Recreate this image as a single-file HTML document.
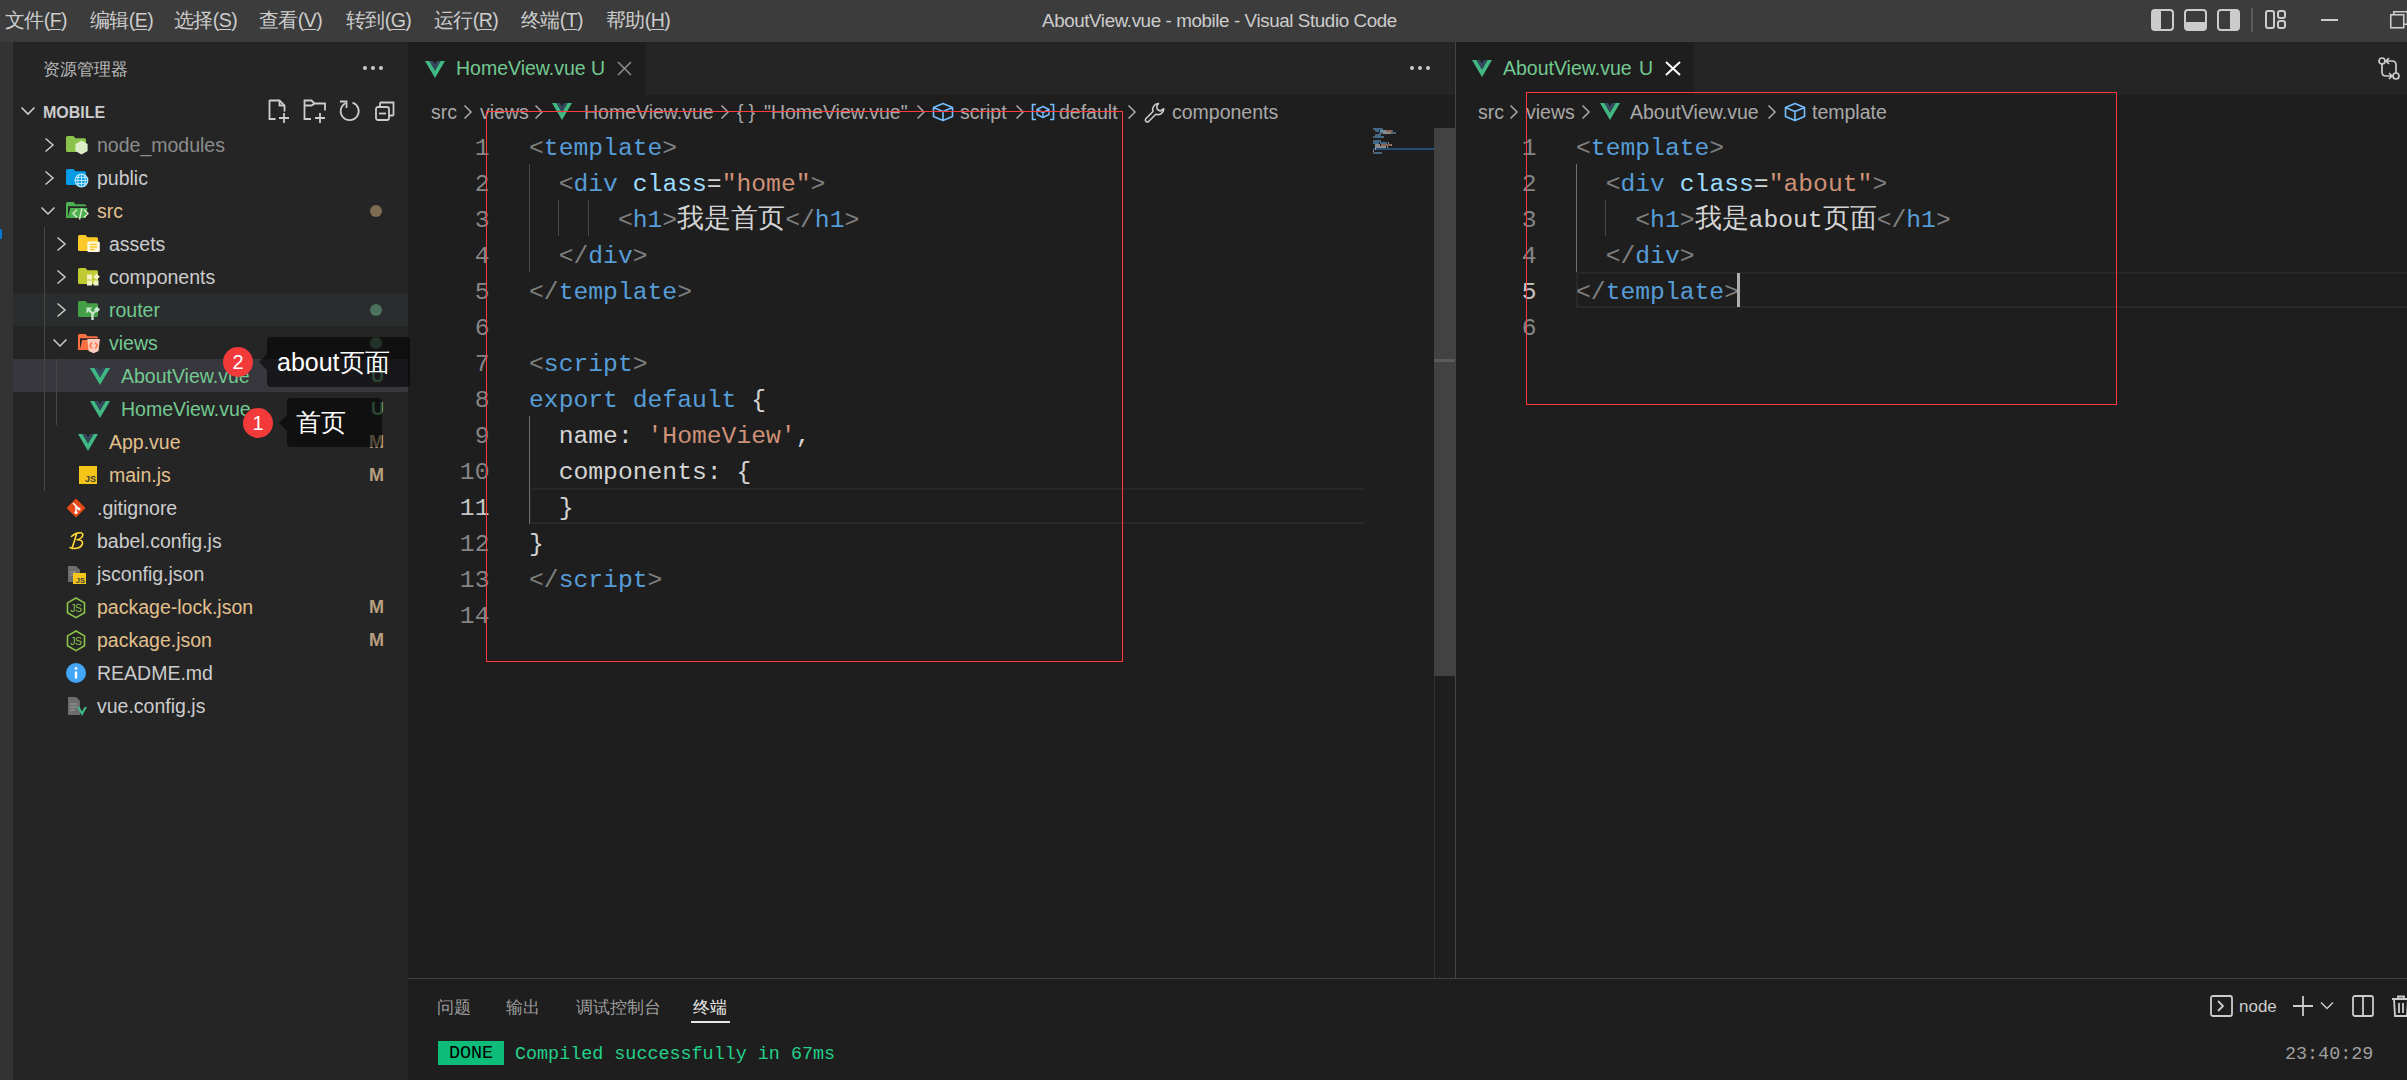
<!DOCTYPE html><html><head><meta charset="utf-8"><title>VS Code</title><style>
*{margin:0;padding:0;box-sizing:border-box}
html,body{width:2407px;height:1080px;overflow:hidden;background:#1e1e1e;font-family:"Liberation Sans",sans-serif;color:#cccccc}
.a{position:absolute;white-space:pre}
.mono{font-family:"Liberation Mono",monospace}
svg{position:absolute;overflow:visible}
.cj{font-size:27px}
</style></head><body>
<div class="a" style="left:0px;top:0px;width:2407px;height:42px;background:#3c3c3c;"></div>
<div class="a" style="left:0px;top:42px;width:13px;height:1038px;background:#333333;"></div>
<div class="a" style="left:0px;top:229px;width:2px;height:10px;background:#0078d4;border-radius:0 1px 1px 0"></div>
<div class="a" style="left:13px;top:42px;width:395px;height:1038px;background:#252526;"></div>
<div class="a" style="left:408px;top:42px;width:1047px;height:53px;background:#252526;"></div>
<div class="a" style="left:408px;top:42px;width:238px;height:53px;background:#1e1e1e;"></div>
<div class="a" style="left:1455px;top:42px;width:1px;height:936px;background:#444444;"></div>
<div class="a" style="left:1456px;top:42px;width:951px;height:53px;background:#252526;"></div>
<div class="a" style="left:1456px;top:42px;width:238px;height:53px;background:#1e1e1e;"></div>
<div class="a" style="left:5px;top:0px;font-size:19.5px;color:#cccccc;line-height:40px;text-decoration-thickness:1px;text-underline-offset:2px;letter-spacing:-0.6px">文件(<u>F</u>)</div>
<div class="a" style="left:90px;top:0px;font-size:19.5px;color:#cccccc;line-height:40px;text-decoration-thickness:1px;text-underline-offset:2px;letter-spacing:-0.6px">编辑(<u>E</u>)</div>
<div class="a" style="left:174px;top:0px;font-size:19.5px;color:#cccccc;line-height:40px;text-decoration-thickness:1px;text-underline-offset:2px;letter-spacing:-0.6px">选择(<u>S</u>)</div>
<div class="a" style="left:259px;top:0px;font-size:19.5px;color:#cccccc;line-height:40px;text-decoration-thickness:1px;text-underline-offset:2px;letter-spacing:-0.6px">查看(<u>V</u>)</div>
<div class="a" style="left:346px;top:0px;font-size:19.5px;color:#cccccc;line-height:40px;text-decoration-thickness:1px;text-underline-offset:2px;letter-spacing:-0.6px">转到(<u>G</u>)</div>
<div class="a" style="left:434px;top:0px;font-size:19.5px;color:#cccccc;line-height:40px;text-decoration-thickness:1px;text-underline-offset:2px;letter-spacing:-0.6px">运行(<u>R</u>)</div>
<div class="a" style="left:521px;top:0px;font-size:19.5px;color:#cccccc;line-height:40px;text-decoration-thickness:1px;text-underline-offset:2px;letter-spacing:-0.6px">终端(<u>T</u>)</div>
<div class="a" style="left:606px;top:0px;font-size:19.5px;color:#cccccc;line-height:40px;text-decoration-thickness:1px;text-underline-offset:2px;letter-spacing:-0.6px">帮助(<u>H</u>)</div>
<div class="a" style="left:1042px;top:1px;font-size:18.8px;color:#cccccc;line-height:40px;letter-spacing:-0.4px">AboutView.vue - mobile - Visual Studio Code</div>
<svg style="left:2151px;top:9px" width="23" height="22" viewBox="0 0 23 22"><rect x="1" y="1" width="21" height="20" rx="3" fill="none" stroke="#cccccc" stroke-width="2"/><rect x="1" y="1" width="9" height="20" rx="2" fill="#cccccc"/></svg>
<svg style="left:2184px;top:9px" width="23" height="22" viewBox="0 0 23 22"><rect x="1" y="1" width="21" height="20" rx="3" fill="none" stroke="#cccccc" stroke-width="2"/><rect x="1" y="13" width="21" height="8" rx="2" fill="#cccccc"/></svg>
<svg style="left:2217px;top:9px" width="23" height="22" viewBox="0 0 23 22"><rect x="1" y="1" width="21" height="20" rx="3" fill="none" stroke="#cccccc" stroke-width="2"/><rect x="13" y="1" width="9" height="20" rx="2" fill="#cccccc"/></svg>
<div class="a" style="left:2251px;top:8px;width:2px;height:24px;background:#5a5a5a;"></div>
<svg style="left:2265px;top:10px" width="22" height="20" viewBox="0 0 22 20"><rect x="1" y="1" width="8" height="17" rx="2" fill="none" stroke="#cccccc" stroke-width="2"/><rect x="13" y="1" width="7" height="7" rx="2" fill="none" stroke="#cccccc" stroke-width="2"/><rect x="13" y="11" width="7" height="7" rx="2" fill="none" stroke="#cccccc" stroke-width="2"/></svg>
<div class="a" style="left:2321px;top:19px;width:17px;height:2px;background:#cccccc;"></div>
<svg style="left:2390px;top:11px" width="20" height="18" viewBox="0 0 20 18"><rect x="0.75" y="3.75" width="13" height="13" fill="none" stroke="#cccccc" stroke-width="1.6"/><path d="M3.75 3.5V0.75H17.5V13.25H14" fill="none" stroke="#cccccc" stroke-width="1.6"/></svg>
<div class="a" style="left:43px;top:51px;font-size:16.5px;color:#bbbbbb;line-height:36px;">资源管理器</div>
<div class="a" style="left:363px;top:66px;width:4px;height:4px;background:#cccccc;border-radius:2px"></div>
<div class="a" style="left:371px;top:66px;width:4px;height:4px;background:#cccccc;border-radius:2px"></div>
<div class="a" style="left:379px;top:66px;width:4px;height:4px;background:#cccccc;border-radius:2px"></div>
<svg style="left:20px;top:104px" width="16" height="14" viewBox="0 0 16 14"><path d="M1.5 3.5l6.5 6.5 6.5-6.5" fill="none" stroke="#cccccc" stroke-width="1.6"/></svg>
<div class="a" style="left:43px;top:96px;font-size:16px;color:#cccccc;line-height:33px;font-weight:bold">MOBILE</div>
<svg style="left:268px;top:99px" width="24" height="24" viewBox="0 0 24 24"><path d="M1.5 1.5h10l5 5v6" fill="none" stroke="#cccccc" stroke-width="1.8"/><path d="M11.5 1.5v5h5" fill="none" stroke="#cccccc" stroke-width="1.8"/><path d="M1.5 1v19h6" fill="none" stroke="#cccccc" stroke-width="1.8"/><path d="M16 14v10M11 19h10" stroke="#cccccc" stroke-width="1.8"/></svg>
<svg style="left:303px;top:99px" width="26" height="24" viewBox="0 0 26 24"><path d="M8 20H1.5V1.5h7l3 3h10.5v7" fill="none" stroke="#cccccc" stroke-width="1.8"/><path d="M1.5 6.5h7l3-2" fill="none" stroke="#cccccc" stroke-width="1.8"/><path d="M17 14v10M12 19h10" stroke="#cccccc" stroke-width="1.8"/></svg>
<svg style="left:339px;top:100px" width="22" height="22" viewBox="0 0 22 22"><path d="M6.5 3.2A9 9 0 1 0 13.5 2.6" fill="none" stroke="#cccccc" stroke-width="1.8"/><path d="M1 1.5h6.5v6.5" fill="none" stroke="#cccccc" stroke-width="1.8"/></svg>
<svg style="left:375px;top:101px" width="22" height="20" viewBox="0 0 22 20"><rect x="1" y="6" width="13" height="13" rx="2" fill="none" stroke="#cccccc" stroke-width="1.8"/><path d="M5 1.5h13.5v13" fill="none" stroke="#cccccc" stroke-width="1.8"/><path d="M5 1.5v4.5M14 14.5h4.5" fill="none" stroke="#cccccc" stroke-width="1.8"/><path d="M4 12.5h7" stroke="#cccccc" stroke-width="1.8"/></svg>
<div class="a" style="left:13px;top:293px;width:395px;height:33px;background:#2a2d2e;"></div>
<div class="a" style="left:13px;top:359px;width:395px;height:33px;background:#37373d;"></div>
<div class="a" style="left:44px;top:227px;width:1px;height:264px;background:#464646;"></div>
<div class="a" style="left:56px;top:359px;width:1px;height:66px;background:#464646;"></div>
<svg style="left:44px;top:137px" width="11" height="16" viewBox="0 0 11 16"><path d="M1.5 1.5l7.5 6.5-7.5 6.5" fill="none" stroke="#cccccc" stroke-width="1.5"/></svg>
<svg style="left:66px;top:136px" width="24" height="20" viewBox="0 0 24 20"><path d="M0 1.5Q0 0 1.5 0h6l2 2.3h9Q20 2.3 20 3.8v10.7Q20 16 18.5 16h-17Q0 16 0 14.5z" fill="#8bc34a"/><path d="M15.5 4.5L21.6 8v7L15.5 18.5 9.4 15V8z" fill="#dcedc8"/></svg>
<div class="a" style="left:97px;top:129px;font-size:19.5px;color:#8c8c8c;line-height:33px;">node_modules</div>
<svg style="left:44px;top:170px" width="11" height="16" viewBox="0 0 11 16"><path d="M1.5 1.5l7.5 6.5-7.5 6.5" fill="none" stroke="#cccccc" stroke-width="1.5"/></svg>
<svg style="left:66px;top:169px" width="24" height="20" viewBox="0 0 24 20"><path d="M0 1.5Q0 0 1.5 0h6l2 2.3h9Q20 2.3 20 3.8v10.7Q20 16 18.5 16h-17Q0 16 0 14.5z" fill="#039be5"/><circle cx="15.5" cy="11.5" r="6.3" fill="#039be5" stroke="#b3e5fc" stroke-width="1.3"/><path d="M9.5 11.5h12M15.5 5.5v12M13 6q-2.5 5.5 0 11M18 6q2.5 5.5 0 11M10.5 8.5h10M10.5 14.5h10" fill="none" stroke="#b3e5fc" stroke-width="1.1"/></svg>
<div class="a" style="left:97px;top:162px;font-size:19.5px;color:#cccccc;line-height:33px;">public</div>
<svg style="left:40px;top:206px" width="16" height="10" viewBox="0 0 16 10"><path d="M1.5 1.5l6.5 6.5 6.5-6.5" fill="none" stroke="#cccccc" stroke-width="1.5"/></svg>
<svg style="left:66px;top:202px" width="24" height="20" viewBox="0 0 24 20"><path d="M0 1.5Q0 0 1.5 0h6l2 2.3h9Q20 2.3 20 3.8V4.3H2V16H0z" fill="#4caf50"/><path d="M4.2 6H21.5L19.5 16H1.8z" fill="#4caf50"/><path d="M11 7.5L7 11.5l4 4M18 7.5l4 4-4 4M16 6l-2.5 11.5" fill="none" stroke="#dcedc8" stroke-width="1.4"/></svg>
<div class="a" style="left:97px;top:195px;font-size:19.5px;color:#e2c08d;line-height:33px;">src</div>
<div class="a" style="left:370px;top:205px;width:12px;height:12px;background:#7d6b52;border-radius:50%"></div>
<svg style="left:56px;top:236px" width="11" height="16" viewBox="0 0 11 16"><path d="M1.5 1.5l7.5 6.5-7.5 6.5" fill="none" stroke="#cccccc" stroke-width="1.5"/></svg>
<svg style="left:78px;top:235px" width="24" height="20" viewBox="0 0 24 20"><path d="M0 1.5Q0 0 1.5 0h6l2 2.3h9Q20 2.3 20 3.8v10.7Q20 16 18.5 16h-17Q0 16 0 14.5z" fill="#ffca28"/><rect x="9.3" y="6.5" width="12.5" height="10.5" rx="1.5" fill="#fff8e1"/><path d="M12 9.5h7M12 12h7M12 14.5h5" stroke="#ffca28" stroke-width="1.3"/></svg>
<div class="a" style="left:109px;top:228px;font-size:19.5px;color:#cccccc;line-height:33px;">assets</div>
<svg style="left:56px;top:269px" width="11" height="16" viewBox="0 0 11 16"><path d="M1.5 1.5l7.5 6.5-7.5 6.5" fill="none" stroke="#cccccc" stroke-width="1.5"/></svg>
<svg style="left:78px;top:268px" width="24" height="20" viewBox="0 0 24 20"><path d="M0 1.5Q0 0 1.5 0h6l2 2.3h9Q20 2.3 20 3.8v10.7Q20 16 18.5 16h-17Q0 16 0 14.5z" fill="#c0ca33"/><rect x="9" y="6.5" width="5" height="5" fill="#f0f4c3"/><rect x="9" y="12.5" width="5" height="5" fill="#f0f4c3"/><rect x="15.5" y="12.5" width="5" height="5" fill="#f0f4c3"/><path d="M18.5 5.5l3.3 3.3-3.3 3.3-3.3-3.3z" fill="#f0f4c3"/></svg>
<div class="a" style="left:109px;top:261px;font-size:19.5px;color:#cccccc;line-height:33px;">components</div>
<svg style="left:56px;top:302px" width="11" height="16" viewBox="0 0 11 16"><path d="M1.5 1.5l7.5 6.5-7.5 6.5" fill="none" stroke="#cccccc" stroke-width="1.5"/></svg>
<svg style="left:78px;top:301px" width="24" height="20" viewBox="0 0 24 20"><path d="M0 1.5Q0 0 1.5 0h6l2 2.3h9Q20 2.3 20 3.8v10.7Q20 16 18.5 16h-17Q0 16 0 14.5z" fill="#43a047"/><path d="M14.5 19V12.5L11.5 9.5" fill="none" stroke="#c8e6c9" stroke-width="2.4"/><path d="M8.5 6.5h6l-6 6z" fill="#c8e6c9"/><path d="M19 5.5l3 3-3 3-3-3z" fill="#c8e6c9"/><path d="M14.5 13l3-3" stroke="#c8e6c9" stroke-width="2"/></svg>
<div class="a" style="left:109px;top:294px;font-size:19.5px;color:#73c991;line-height:33px;">router</div>
<div class="a" style="left:370px;top:304px;width:12px;height:12px;background:#4b725a;border-radius:50%"></div>
<svg style="left:52px;top:338px" width="16" height="10" viewBox="0 0 16 10"><path d="M1.5 1.5l6.5 6.5 6.5-6.5" fill="none" stroke="#cccccc" stroke-width="1.5"/></svg>
<svg style="left:78px;top:334px" width="24" height="20" viewBox="0 0 24 20"><path d="M0 1.5Q0 0 1.5 0h6l2 2.3h9Q20 2.3 20 3.8V4.3H2V16H0z" fill="#ff7043"/><path d="M4.2 6H21.5L19.5 16H1.8z" fill="#ff7043"/><path d="M9.3 5h12.5l-1.2 12-5 2.2-5-2.2z" fill="#ffccbc"/><path d="M14 8.5l-2.3 3 2.3 3M17.2 8.5l2.3 3-2.3 3" fill="none" stroke="#ff7043" stroke-width="1.3"/></svg>
<div class="a" style="left:109px;top:327px;font-size:19.5px;color:#73c991;line-height:33px;">views</div>
<div class="a" style="left:370px;top:337px;width:12px;height:12px;background:#4b725a;border-radius:50%"></div>
<svg style="left:90px;top:368px" width="20" height="17" viewBox="0 0 20 17"><path d="M0 0h4.5L10 9.5 15.5 0H20L10 17z" fill="#41b883"/><path d="M4.5 0h3.5L10 3.5 12 0h3.5L10 9.5z" fill="#35495e"/></svg>
<div class="a" style="left:121px;top:360px;font-size:19.5px;color:#73c991;line-height:33px;">AboutView.vue</div>
<div class="a" style="left:344px;width:40px;text-align:right;top:360px;font-size:18px;line-height:33px;color:#5f9a73;font-weight:bold">U</div>
<svg style="left:90px;top:401px" width="20" height="17" viewBox="0 0 20 17"><path d="M0 0h4.5L10 9.5 15.5 0H20L10 17z" fill="#41b883"/><path d="M4.5 0h3.5L10 3.5 12 0h3.5L10 9.5z" fill="#35495e"/></svg>
<div class="a" style="left:121px;top:393px;font-size:19.5px;color:#73c991;line-height:33px;">HomeView.vue</div>
<div class="a" style="left:344px;width:40px;text-align:right;top:393px;font-size:18px;line-height:33px;color:#5f9a73;font-weight:bold">U</div>
<svg style="left:78px;top:434px" width="20" height="17" viewBox="0 0 20 17"><path d="M0 0h4.5L10 9.5 15.5 0H20L10 17z" fill="#41b883"/><path d="M4.5 0h3.5L10 3.5 12 0h3.5L10 9.5z" fill="#35495e"/></svg>
<div class="a" style="left:109px;top:426px;font-size:19.5px;color:#e2c08d;line-height:33px;">App.vue</div>
<div class="a" style="left:344px;width:40px;text-align:right;top:426px;font-size:18px;line-height:33px;color:#b8a07e;font-weight:bold">M</div>
<svg style="left:79px;top:466px" width="18" height="18" viewBox="0 0 18 18"><rect width="18" height="18" fill="#f5c518"/><text x="17" y="16" font-family="Liberation Sans" font-weight="bold" font-size="9" fill="#3d3d3d" text-anchor="end">JS</text></svg>
<div class="a" style="left:109px;top:459px;font-size:19.5px;color:#e2c08d;line-height:33px;">main.js</div>
<div class="a" style="left:344px;width:40px;text-align:right;top:459px;font-size:18px;line-height:33px;color:#b8a07e;font-weight:bold">M</div>
<svg style="left:66px;top:498px" width="20" height="20" viewBox="0 0 20 20"><path d="M10 0.5l9.5 9.5-9.5 9.5-9.5-9.5z" fill="#e64a19"/><path d="M7 5l6 6M10 8v7" stroke="#fff" stroke-width="1.5" fill="none"/><circle cx="13" cy="11" r="1.6" fill="#fff"/><circle cx="10" cy="14.5" r="1.6" fill="#fff"/></svg>
<div class="a" style="left:97px;top:492px;font-size:19.5px;color:#cccccc;line-height:33px;">.gitignore</div>
<svg style="left:68px;top:531px" width="18" height="20" viewBox="0 0 18 20"><path d="M3.5 5.5Q8 1 13 1.8Q16.5 2.8 13.5 6.5Q11.5 8.5 9 8.7Q15 8.5 14.5 12.5Q13.5 17 7 17.5Q4 17.6 2 16.5M8.5 3.2L4 17.5" fill="none" stroke="#fdd835" stroke-width="1.6" stroke-linecap="round" stroke-linejoin="round"/></svg>
<div class="a" style="left:97px;top:525px;font-size:19.5px;color:#cccccc;line-height:33px;">babel.config.js</div>
<svg style="left:67px;top:565px" width="20" height="20" viewBox="0 0 20 20"><path d="M1 1h8l4 4v12H1z" fill="#6d6d6d"/><path d="M3 7h6M3 10h6" stroke="#9e9e9e" stroke-width="1.2"/><rect x="6" y="8" width="13" height="11" fill="#f5c518"/><text x="18" y="17.5" font-family="Liberation Sans" font-weight="bold" font-size="7.5" fill="#3d3d3d" text-anchor="end">JS</text></svg>
<div class="a" style="left:97px;top:558px;font-size:19.5px;color:#cccccc;line-height:33px;">jsconfig.json</div>
<svg style="left:66px;top:597px" width="20" height="21" viewBox="0 0 20 21"><path d="M10 1l8.5 4.9v9.8L10 20.6 1.5 15.7V5.9z" fill="none" stroke="#8bc34a" stroke-width="1.6"/><text x="10" y="14.8" font-family="Liberation Sans" font-size="10.5" fill="#8bc34a" text-anchor="middle" letter-spacing="-0.5">JS</text></svg>
<div class="a" style="left:97px;top:591px;font-size:19.5px;color:#e2c08d;line-height:33px;">package-lock.json</div>
<div class="a" style="left:344px;width:40px;text-align:right;top:591px;font-size:18px;line-height:33px;color:#b8a07e;font-weight:bold">M</div>
<svg style="left:66px;top:630px" width="20" height="21" viewBox="0 0 20 21"><path d="M10 1l8.5 4.9v9.8L10 20.6 1.5 15.7V5.9z" fill="none" stroke="#8bc34a" stroke-width="1.6"/><text x="10" y="14.8" font-family="Liberation Sans" font-size="10.5" fill="#8bc34a" text-anchor="middle" letter-spacing="-0.5">JS</text></svg>
<div class="a" style="left:97px;top:624px;font-size:19.5px;color:#e2c08d;line-height:33px;">package.json</div>
<div class="a" style="left:344px;width:40px;text-align:right;top:624px;font-size:18px;line-height:33px;color:#b8a07e;font-weight:bold">M</div>
<svg style="left:66px;top:663px" width="20" height="20" viewBox="0 0 20 20"><circle cx="10" cy="10" r="10" fill="#42a5f5"/><rect x="8.8" y="8.5" width="2.4" height="7" fill="#fff"/><circle cx="10" cy="5.5" r="1.4" fill="#fff"/></svg>
<div class="a" style="left:97px;top:657px;font-size:19.5px;color:#cccccc;line-height:33px;">README.md</div>
<svg style="left:67px;top:696px" width="22" height="20" viewBox="0 0 22 20"><path d="M1 1h8l4 4v14H1z" fill="#6d6d6d"/><path d="M3 8h7M3 11h7M3 14h5" stroke="#9e9e9e" stroke-width="1.2"/><path d="M10 11h2.5L15 15.5 17.5 11H20l-5 9z" fill="#41b883"/></svg>
<div class="a" style="left:97px;top:690px;font-size:19.5px;color:#cccccc;line-height:33px;">vue.config.js</div>
<div class="a" style="left:267px;top:337px;width:143px;height:50px;background:rgba(0,0,0,0.55);border-radius:4px"></div>
<svg style="left:259px;top:354px" width="8" height="16"><path d="M0 8L8 0V16z" fill="rgba(0,0,0,0.55)"/></svg>
<div class="a" style="left:223px;top:347px;width:30px;height:30px;border-radius:50%;background:#f23a3a;color:#fff;font-size:20px;line-height:30px;text-align:center">2</div>
<div class="a" style="left:277px;top:337px;font-size:25px;color:#ffffff;line-height:50px;">about页面</div>
<div class="a" style="left:287px;top:398px;width:95px;height:49px;background:rgba(0,0,0,0.55);border-radius:4px"></div>
<svg style="left:279px;top:415px" width="8" height="16"><path d="M0 8L8 0V16z" fill="rgba(0,0,0,0.55)"/></svg>
<div class="a" style="left:243px;top:408px;width:30px;height:30px;border-radius:50%;background:#f23a3a;color:#fff;font-size:20px;line-height:30px;text-align:center">1</div>
<div class="a" style="left:296px;top:398px;font-size:25px;color:#ffffff;line-height:49px;">首页</div>
<svg style="left:425px;top:61px" width="20" height="17" viewBox="0 0 20 17"><path d="M0 0h4.5L10 9.5 15.5 0H20L10 17z" fill="#41b883"/><path d="M4.5 0h3.5L10 3.5 12 0h3.5L10 9.5z" fill="#35495e"/></svg>
<div class="a" style="left:456px;top:42px;font-size:19.5px;color:#73c991;line-height:53px;">HomeView.vue</div>
<div class="a" style="left:591px;top:42px;font-size:19.5px;color:#73c991;line-height:53px;">U</div>
<svg style="left:617px;top:61px" width="15" height="15" viewBox="0 0 15 15"><path d="M1 1l13 13M14 1L1 14" stroke="#8b8b8b" stroke-width="1.6"/></svg>
<div class="a" style="left:1410px;top:66px;width:4px;height:4px;background:#cccccc;border-radius:2px"></div>
<div class="a" style="left:1418px;top:66px;width:4px;height:4px;background:#cccccc;border-radius:2px"></div>
<div class="a" style="left:1426px;top:66px;width:4px;height:4px;background:#cccccc;border-radius:2px"></div>
<svg style="left:1472px;top:60px" width="20" height="17" viewBox="0 0 20 17"><path d="M0 0h4.5L10 9.5 15.5 0H20L10 17z" fill="#41b883"/><path d="M4.5 0h3.5L10 3.5 12 0h3.5L10 9.5z" fill="#35495e"/></svg>
<div class="a" style="left:1503px;top:42px;font-size:19.5px;color:#73c991;line-height:53px;">AboutView.vue</div>
<div class="a" style="left:1639px;top:42px;font-size:19.5px;color:#73c991;line-height:53px;">U</div>
<svg style="left:1665px;top:61px" width="16" height="15" viewBox="0 0 16 15"><path d="M1 1l14 13M15 1L1 14" stroke="#ffffff" stroke-width="2"/></svg>
<svg style="left:2377px;top:55px" width="24" height="26" viewBox="0 0 24 26"><circle cx="5" cy="6" r="3" fill="none" stroke="#cccccc" stroke-width="1.7"/><circle cx="19" cy="21" r="3" fill="none" stroke="#cccccc" stroke-width="1.7"/><path d="M5 9V17Q5 21 9 21H15M12 18l3 3-3 3M19 18V10Q19 6 15 6H9M12 3L9 6l3 3" fill="none" stroke="#cccccc" stroke-width="1.7"/></svg>
<div class="a" style="left:431px;top:96px;font-size:19.5px;color:#a9a9a9;line-height:33px;">src</div>
<svg style="left:463px;top:104px" width="10" height="16" viewBox="0 0 10 16"><path d="M1.5 1.5l6.5 6.5-6.5 6.5" fill="none" stroke="#a9a9a9" stroke-width="1.5"/></svg>
<div class="a" style="left:480px;top:96px;font-size:19.5px;color:#a9a9a9;line-height:33px;">views</div>
<svg style="left:534px;top:104px" width="10" height="16" viewBox="0 0 10 16"><path d="M1.5 1.5l6.5 6.5-6.5 6.5" fill="none" stroke="#a9a9a9" stroke-width="1.5"/></svg>
<svg style="left:552px;top:103px" width="20" height="17" viewBox="0 0 20 17"><path d="M0 0h4.5L10 9.5 15.5 0H20L10 17z" fill="#41b883"/><path d="M4.5 0h3.5L10 3.5 12 0h3.5L10 9.5z" fill="#35495e"/></svg>
<div class="a" style="left:584px;top:96px;font-size:19.5px;color:#a9a9a9;line-height:33px;">HomeView.vue</div>
<svg style="left:720px;top:104px" width="10" height="16" viewBox="0 0 10 16"><path d="M1.5 1.5l6.5 6.5-6.5 6.5" fill="none" stroke="#a9a9a9" stroke-width="1.5"/></svg>
<div class="a" style="left:737px;top:96px;font-size:19.5px;color:#a9a9a9;line-height:33px;letter-spacing:5px">{}</div>
<div class="a" style="left:764px;top:96px;font-size:19.5px;color:#a9a9a9;line-height:33px;">"HomeView.vue"</div>
<svg style="left:916px;top:104px" width="10" height="16" viewBox="0 0 10 16"><path d="M1.5 1.5l6.5 6.5-6.5 6.5" fill="none" stroke="#a9a9a9" stroke-width="1.5"/></svg>
<svg style="left:932px;top:102px" width="22" height="20" viewBox="0 0 22 20"><path d="M11 1.5L20.5 5.5v9L11 18.5 1.5 14.5v-9z M1.5 5.5L11 9.5l9.5-4M11 9.5v9" fill="none" stroke="#75beff" stroke-width="1.6" stroke-linejoin="round"/></svg>
<div class="a" style="left:960px;top:96px;font-size:19.5px;color:#a9a9a9;line-height:33px;">script</div>
<svg style="left:1015px;top:104px" width="10" height="16" viewBox="0 0 10 16"><path d="M1.5 1.5l6.5 6.5-6.5 6.5" fill="none" stroke="#a9a9a9" stroke-width="1.5"/></svg>
<svg style="left:1031px;top:103px" width="24" height="18" viewBox="0 0 24 18"><path d="M5 1.5H1.5v15H5M19 1.5h3.5v15H19" fill="none" stroke="#75beff" stroke-width="1.6"/><path d="M12 3.5l6 3v5l-6 3-6-3v-5z M6 6.5l6 3 6-3M12 9.5v5" fill="none" stroke="#75beff" stroke-width="1.4" stroke-linejoin="round"/></svg>
<div class="a" style="left:1059px;top:96px;font-size:19.5px;color:#a9a9a9;line-height:33px;">default</div>
<svg style="left:1127px;top:104px" width="10" height="16" viewBox="0 0 10 16"><path d="M1.5 1.5l6.5 6.5-6.5 6.5" fill="none" stroke="#a9a9a9" stroke-width="1.5"/></svg>
<svg style="left:1144px;top:101px" width="24" height="24" viewBox="0 0 24 24"><path d="M14.5 2.5a6 6 0 0 0-5.5 8L1.8 17.7a2 2 0 0 0 2.8 2.8L11.8 13.3a6 6 0 0 0 8-5.5l-3.5 2.2-3-1.5-.5-3.5z" fill="none" stroke="#cccccc" stroke-width="1.6" stroke-linejoin="round"/></svg>
<div class="a" style="left:1172px;top:96px;font-size:19.5px;color:#a9a9a9;line-height:33px;">components</div>
<div class="a" style="left:1478px;top:96px;font-size:19.5px;color:#a9a9a9;line-height:33px;">src</div>
<svg style="left:1509px;top:104px" width="10" height="16" viewBox="0 0 10 16"><path d="M1.5 1.5l6.5 6.5-6.5 6.5" fill="none" stroke="#a9a9a9" stroke-width="1.5"/></svg>
<div class="a" style="left:1526px;top:96px;font-size:19.5px;color:#a9a9a9;line-height:33px;">views</div>
<svg style="left:1581px;top:104px" width="10" height="16" viewBox="0 0 10 16"><path d="M1.5 1.5l6.5 6.5-6.5 6.5" fill="none" stroke="#a9a9a9" stroke-width="1.5"/></svg>
<svg style="left:1600px;top:103px" width="20" height="17" viewBox="0 0 20 17"><path d="M0 0h4.5L10 9.5 15.5 0H20L10 17z" fill="#41b883"/><path d="M4.5 0h3.5L10 3.5 12 0h3.5L10 9.5z" fill="#35495e"/></svg>
<div class="a" style="left:1630px;top:96px;font-size:19.5px;color:#a9a9a9;line-height:33px;">AboutView.vue</div>
<svg style="left:1767px;top:104px" width="10" height="16" viewBox="0 0 10 16"><path d="M1.5 1.5l6.5 6.5-6.5 6.5" fill="none" stroke="#a9a9a9" stroke-width="1.5"/></svg>
<svg style="left:1784px;top:102px" width="22" height="20" viewBox="0 0 22 20"><path d="M11 1.5L20.5 5.5v9L11 18.5 1.5 14.5v-9z M1.5 5.5L11 9.5l9.5-4M11 9.5v9" fill="none" stroke="#75beff" stroke-width="1.6" stroke-linejoin="round"/></svg>
<div class="a" style="left:1812px;top:96px;font-size:19.5px;color:#a9a9a9;line-height:33px;">template</div>
<div class="a" style="left:529px;top:488px;width:836px;height:36px;background:transparent;border:2px solid #282828;border-right:0"></div>
<div class="a" style="left:1576px;top:272px;width:831px;height:36px;background:transparent;border:2px solid #282828;border-right:0"></div>
<div class="a" style="left:529px;top:164px;width:1px;height:108px;background:#484848;"></div>
<div class="a" style="left:558px;top:200px;width:1px;height:36px;background:#484848;"></div>
<div class="a" style="left:588px;top:200px;width:1px;height:36px;background:#484848;"></div>
<div class="a" style="left:529px;top:416px;width:1px;height:108px;background:#6e6e6e;"></div>
<div class="a" style="left:1576px;top:164px;width:1px;height:108px;background:#6e6e6e;"></div>
<div class="a" style="left:1605px;top:200px;width:1px;height:36px;background:#484848;"></div>
<div class="a mono" style="left:429.5px;width:60px;text-align:right;top:129.7px;font-size:24.7px;line-height:36px;color:#858585">1</div>
<div class="a mono" style="left:529px;top:129.7px;font-size:24.7px;line-height:36px"><span style="color:#808080">&lt;</span><span style="color:#569cd6">template</span><span style="color:#808080">&gt;</span></div>
<div class="a mono" style="left:429.5px;width:60px;text-align:right;top:165.7px;font-size:24.7px;line-height:36px;color:#858585">2</div>
<div class="a mono" style="left:529px;top:165.7px;font-size:24.7px;line-height:36px"><span style="color:#d4d4d4">  </span><span style="color:#808080">&lt;</span><span style="color:#569cd6">div</span><span style="color:#d4d4d4"> </span><span style="color:#9cdcfe">class</span><span style="color:#d4d4d4">=</span><span style="color:#ce9178">"home"</span><span style="color:#808080">&gt;</span></div>
<div class="a mono" style="left:429.5px;width:60px;text-align:right;top:201.7px;font-size:24.7px;line-height:36px;color:#858585">3</div>
<div class="a mono" style="left:529px;top:201.7px;font-size:24.7px;line-height:36px"><span style="color:#d4d4d4">      </span><span style="color:#808080">&lt;</span><span style="color:#569cd6">h1</span><span style="color:#808080">&gt;</span><span style="color:#d4d4d4"><span class="cj">我是首页</span></span><span style="color:#808080">&lt;/</span><span style="color:#569cd6">h1</span><span style="color:#808080">&gt;</span></div>
<div class="a mono" style="left:429.5px;width:60px;text-align:right;top:237.7px;font-size:24.7px;line-height:36px;color:#858585">4</div>
<div class="a mono" style="left:529px;top:237.7px;font-size:24.7px;line-height:36px"><span style="color:#d4d4d4">  </span><span style="color:#808080">&lt;/</span><span style="color:#569cd6">div</span><span style="color:#808080">&gt;</span></div>
<div class="a mono" style="left:429.5px;width:60px;text-align:right;top:273.7px;font-size:24.7px;line-height:36px;color:#858585">5</div>
<div class="a mono" style="left:529px;top:273.7px;font-size:24.7px;line-height:36px"><span style="color:#808080">&lt;/</span><span style="color:#569cd6">template</span><span style="color:#808080">&gt;</span></div>
<div class="a mono" style="left:429.5px;width:60px;text-align:right;top:309.7px;font-size:24.7px;line-height:36px;color:#858585">6</div>
<div class="a mono" style="left:529px;top:309.7px;font-size:24.7px;line-height:36px"></div>
<div class="a mono" style="left:429.5px;width:60px;text-align:right;top:345.7px;font-size:24.7px;line-height:36px;color:#858585">7</div>
<div class="a mono" style="left:529px;top:345.7px;font-size:24.7px;line-height:36px"><span style="color:#808080">&lt;</span><span style="color:#569cd6">script</span><span style="color:#808080">&gt;</span></div>
<div class="a mono" style="left:429.5px;width:60px;text-align:right;top:381.7px;font-size:24.7px;line-height:36px;color:#858585">8</div>
<div class="a mono" style="left:529px;top:381.7px;font-size:24.7px;line-height:36px"><span style="color:#569cd6">export</span><span style="color:#d4d4d4"> </span><span style="color:#569cd6">default</span><span style="color:#d4d4d4"> {</span></div>
<div class="a mono" style="left:429.5px;width:60px;text-align:right;top:417.7px;font-size:24.7px;line-height:36px;color:#858585">9</div>
<div class="a mono" style="left:529px;top:417.7px;font-size:24.7px;line-height:36px"><span style="color:#d4d4d4">  name: </span><span style="color:#ce9178">'HomeView'</span><span style="color:#d4d4d4">,</span></div>
<div class="a mono" style="left:429.5px;width:60px;text-align:right;top:453.7px;font-size:24.7px;line-height:36px;color:#858585">10</div>
<div class="a mono" style="left:529px;top:453.7px;font-size:24.7px;line-height:36px"><span style="color:#d4d4d4">  components: {</span></div>
<div class="a mono" style="left:429.5px;width:60px;text-align:right;top:489.7px;font-size:24.7px;line-height:36px;color:#c6c6c6">11</div>
<div class="a mono" style="left:529px;top:489.7px;font-size:24.7px;line-height:36px"><span style="color:#d4d4d4">  }</span></div>
<div class="a mono" style="left:429.5px;width:60px;text-align:right;top:525.7px;font-size:24.7px;line-height:36px;color:#858585">12</div>
<div class="a mono" style="left:529px;top:525.7px;font-size:24.7px;line-height:36px"><span style="color:#d4d4d4">}</span></div>
<div class="a mono" style="left:429.5px;width:60px;text-align:right;top:561.7px;font-size:24.7px;line-height:36px;color:#858585">13</div>
<div class="a mono" style="left:529px;top:561.7px;font-size:24.7px;line-height:36px"><span style="color:#808080">&lt;/</span><span style="color:#569cd6">script</span><span style="color:#808080">&gt;</span></div>
<div class="a mono" style="left:429.5px;width:60px;text-align:right;top:597.7px;font-size:24.7px;line-height:36px;color:#858585">14</div>
<div class="a mono" style="left:529px;top:597.7px;font-size:24.7px;line-height:36px"></div>
<div class="a mono" style="left:1476.5px;width:60px;text-align:right;top:129.7px;font-size:24.7px;line-height:36px;color:#858585">1</div>
<div class="a mono" style="left:1576px;top:129.7px;font-size:24.7px;line-height:36px"><span style="color:#808080">&lt;</span><span style="color:#569cd6">template</span><span style="color:#808080">&gt;</span></div>
<div class="a mono" style="left:1476.5px;width:60px;text-align:right;top:165.7px;font-size:24.7px;line-height:36px;color:#858585">2</div>
<div class="a mono" style="left:1576px;top:165.7px;font-size:24.7px;line-height:36px"><span style="color:#d4d4d4">  </span><span style="color:#808080">&lt;</span><span style="color:#569cd6">div</span><span style="color:#d4d4d4"> </span><span style="color:#9cdcfe">class</span><span style="color:#d4d4d4">=</span><span style="color:#ce9178">"about"</span><span style="color:#808080">&gt;</span></div>
<div class="a mono" style="left:1476.5px;width:60px;text-align:right;top:201.7px;font-size:24.7px;line-height:36px;color:#858585">3</div>
<div class="a mono" style="left:1576px;top:201.7px;font-size:24.7px;line-height:36px"><span style="color:#d4d4d4">    </span><span style="color:#808080">&lt;</span><span style="color:#569cd6">h1</span><span style="color:#808080">&gt;</span><span style="color:#d4d4d4"><span class="cj">我是</span>about<span class="cj">页面</span></span><span style="color:#808080">&lt;/</span><span style="color:#569cd6">h1</span><span style="color:#808080">&gt;</span></div>
<div class="a mono" style="left:1476.5px;width:60px;text-align:right;top:237.7px;font-size:24.7px;line-height:36px;color:#858585">4</div>
<div class="a mono" style="left:1576px;top:237.7px;font-size:24.7px;line-height:36px"><span style="color:#d4d4d4">  </span><span style="color:#808080">&lt;/</span><span style="color:#569cd6">div</span><span style="color:#808080">&gt;</span></div>
<div class="a mono" style="left:1476.5px;width:60px;text-align:right;top:273.7px;font-size:24.7px;line-height:36px;color:#c6c6c6">5</div>
<div class="a mono" style="left:1576px;top:273.7px;font-size:24.7px;line-height:36px"><span style="color:#808080">&lt;/</span><span style="color:#569cd6">template</span><span style="color:#808080">&gt;</span></div>
<div class="a mono" style="left:1476.5px;width:60px;text-align:right;top:309.7px;font-size:24.7px;line-height:36px;color:#858585">6</div>
<div class="a mono" style="left:1576px;top:309.7px;font-size:24.7px;line-height:36px"></div>
<div class="a" style="left:1737px;top:273px;width:3px;height:34px;background:#aeafad;"></div>
<div class="a" style="left:1373px;top:148px;width:61px;height:2px;background:#264f78;"></div>
<div class="a" style="left:1373px;top:128px;width:1px;height:2px;background:#808080;opacity:0.6"></div>
<div class="a" style="left:1374px;top:128px;width:8px;height:2px;background:#569cd6;opacity:0.6"></div>
<div class="a" style="left:1382px;top:128px;width:1px;height:2px;background:#808080;opacity:0.6"></div>
<div class="a" style="left:1375px;top:130px;width:1px;height:2px;background:#808080;opacity:0.6"></div>
<div class="a" style="left:1376px;top:130px;width:3px;height:2px;background:#569cd6;opacity:0.6"></div>
<div class="a" style="left:1380px;top:130px;width:5px;height:2px;background:#9cdcfe;opacity:0.6"></div>
<div class="a" style="left:1385px;top:130px;width:1px;height:2px;background:#d4d4d4;opacity:0.6"></div>
<div class="a" style="left:1386px;top:130px;width:6px;height:2px;background:#ce9178;opacity:0.6"></div>
<div class="a" style="left:1392px;top:130px;width:1px;height:2px;background:#808080;opacity:0.6"></div>
<div class="a" style="left:1379px;top:132px;width:1px;height:2px;background:#808080;opacity:0.6"></div>
<div class="a" style="left:1380px;top:132px;width:2px;height:2px;background:#569cd6;opacity:0.6"></div>
<div class="a" style="left:1382px;top:132px;width:1px;height:2px;background:#808080;opacity:0.6"></div>
<div class="a" style="left:1383px;top:132px;width:8px;height:2px;background:#d4d4d4;opacity:0.6"></div>
<div class="a" style="left:1391px;top:132px;width:2px;height:2px;background:#808080;opacity:0.6"></div>
<div class="a" style="left:1393px;top:132px;width:2px;height:2px;background:#569cd6;opacity:0.6"></div>
<div class="a" style="left:1395px;top:132px;width:1px;height:2px;background:#808080;opacity:0.6"></div>
<div class="a" style="left:1375px;top:134px;width:2px;height:2px;background:#808080;opacity:0.6"></div>
<div class="a" style="left:1377px;top:134px;width:3px;height:2px;background:#569cd6;opacity:0.6"></div>
<div class="a" style="left:1380px;top:134px;width:1px;height:2px;background:#808080;opacity:0.6"></div>
<div class="a" style="left:1373px;top:136px;width:2px;height:2px;background:#808080;opacity:0.6"></div>
<div class="a" style="left:1375px;top:136px;width:8px;height:2px;background:#569cd6;opacity:0.6"></div>
<div class="a" style="left:1383px;top:136px;width:1px;height:2px;background:#808080;opacity:0.6"></div>
<div class="a" style="left:1373px;top:140px;width:1px;height:2px;background:#808080;opacity:0.6"></div>
<div class="a" style="left:1374px;top:140px;width:6px;height:2px;background:#569cd6;opacity:0.6"></div>
<div class="a" style="left:1380px;top:140px;width:1px;height:2px;background:#808080;opacity:0.6"></div>
<div class="a" style="left:1373px;top:142px;width:6px;height:2px;background:#569cd6;opacity:0.6"></div>
<div class="a" style="left:1380px;top:142px;width:7px;height:2px;background:#569cd6;opacity:0.6"></div>
<div class="a" style="left:1388px;top:142px;width:1px;height:2px;background:#d4d4d4;opacity:0.6"></div>
<div class="a" style="left:1375px;top:144px;width:5px;height:2px;background:#d4d4d4;opacity:0.6"></div>
<div class="a" style="left:1381px;top:144px;width:10px;height:2px;background:#ce9178;opacity:0.6"></div>
<div class="a" style="left:1391px;top:144px;width:1px;height:2px;background:#d4d4d4;opacity:0.6"></div>
<div class="a" style="left:1375px;top:146px;width:11px;height:2px;background:#d4d4d4;opacity:0.6"></div>
<div class="a" style="left:1387px;top:146px;width:1px;height:2px;background:#d4d4d4;opacity:0.6"></div>
<div class="a" style="left:1375px;top:148px;width:1px;height:2px;background:#d4d4d4;opacity:0.6"></div>
<div class="a" style="left:1373px;top:150px;width:1px;height:2px;background:#d4d4d4;opacity:0.6"></div>
<div class="a" style="left:1373px;top:152px;width:2px;height:2px;background:#808080;opacity:0.6"></div>
<div class="a" style="left:1375px;top:152px;width:6px;height:2px;background:#569cd6;opacity:0.6"></div>
<div class="a" style="left:1381px;top:152px;width:1px;height:2px;background:#808080;opacity:0.6"></div>
<div class="a" style="left:1434px;top:128px;width:21px;height:548px;background:#424242;"></div>
<div class="a" style="left:1434px;top:676px;width:1px;height:302px;background:#333333;"></div>
<div class="a" style="left:1434px;top:359px;width:21px;height:3px;background:#5a5a5a;"></div>
<div class="a" style="left:486px;top:111px;width:637px;height:551px;background:transparent;border:1.5px solid #ff3b3b"></div>
<div class="a" style="left:1526px;top:92px;width:591px;height:313px;background:transparent;border:1.5px solid #ff3b3b"></div>
<div class="a" style="left:408px;top:978px;width:1999px;height:1px;background:#414141;"></div>
<div class="a" style="left:437px;top:990px;font-size:16.5px;color:#9d9d9d;line-height:34px;">问题</div>
<div class="a" style="left:506px;top:990px;font-size:16.5px;color:#9d9d9d;line-height:34px;">输出</div>
<div class="a" style="left:576px;top:990px;font-size:16.5px;color:#9d9d9d;line-height:34px;">调试控制台</div>
<div class="a" style="left:693px;top:990px;font-size:16.5px;color:#e7e7e7;line-height:34px;">终端</div>
<div class="a" style="left:691px;top:1021px;width:39px;height:2px;background:#e7e7e7;"></div>
<div class="a" style="left:438px;top:1041px;width:66px;height:24px;background:#0dbc79;"></div>
<div class="a mono" style="left:449px;top:1042px;font-size:18.4px;color:#000000;line-height:24px;">DONE</div>
<div class="a mono" style="left:515px;top:1038px;font-size:18.4px;color:#23d18b;line-height:34px;">Compiled successfully in 67ms</div>
<div class="a mono" style="left:2285px;top:1038px;font-size:18.4px;color:#a0a0a0;line-height:34px;">23:40:29</div>
<svg style="left:2210px;top:995px" width="23" height="22" viewBox="0 0 23 22"><rect x="1" y="1" width="21" height="20" rx="2" fill="none" stroke="#cccccc" stroke-width="1.8"/><path d="M8 6l5 5-5 5" fill="none" stroke="#cccccc" stroke-width="1.8"/></svg>
<div class="a" style="left:2239px;top:990px;font-size:17px;color:#cccccc;line-height:34px;">node</div>
<svg style="left:2292px;top:995px" width="22" height="22" viewBox="0 0 22 22"><path d="M11 1v20M1 11h20" stroke="#cccccc" stroke-width="1.8"/></svg>
<svg style="left:2320px;top:1001px" width="14" height="9" viewBox="0 0 14 9"><path d="M1 1.5l6 6 6-6" fill="none" stroke="#cccccc" stroke-width="1.5"/></svg>
<svg style="left:2352px;top:995px" width="22" height="22" viewBox="0 0 22 22"><rect x="1" y="1" width="20" height="20" rx="2" fill="none" stroke="#cccccc" stroke-width="1.8"/><path d="M11 1v20" stroke="#cccccc" stroke-width="1.8"/></svg>
<svg style="left:2391px;top:995px" width="20" height="22" viewBox="0 0 20 22"><path d="M1 4h18M7 4V1.5h6V4M3 4l1 17h12l1-17M8 8v10M12 8v10" fill="none" stroke="#cccccc" stroke-width="1.8"/></svg>
</body></html>
